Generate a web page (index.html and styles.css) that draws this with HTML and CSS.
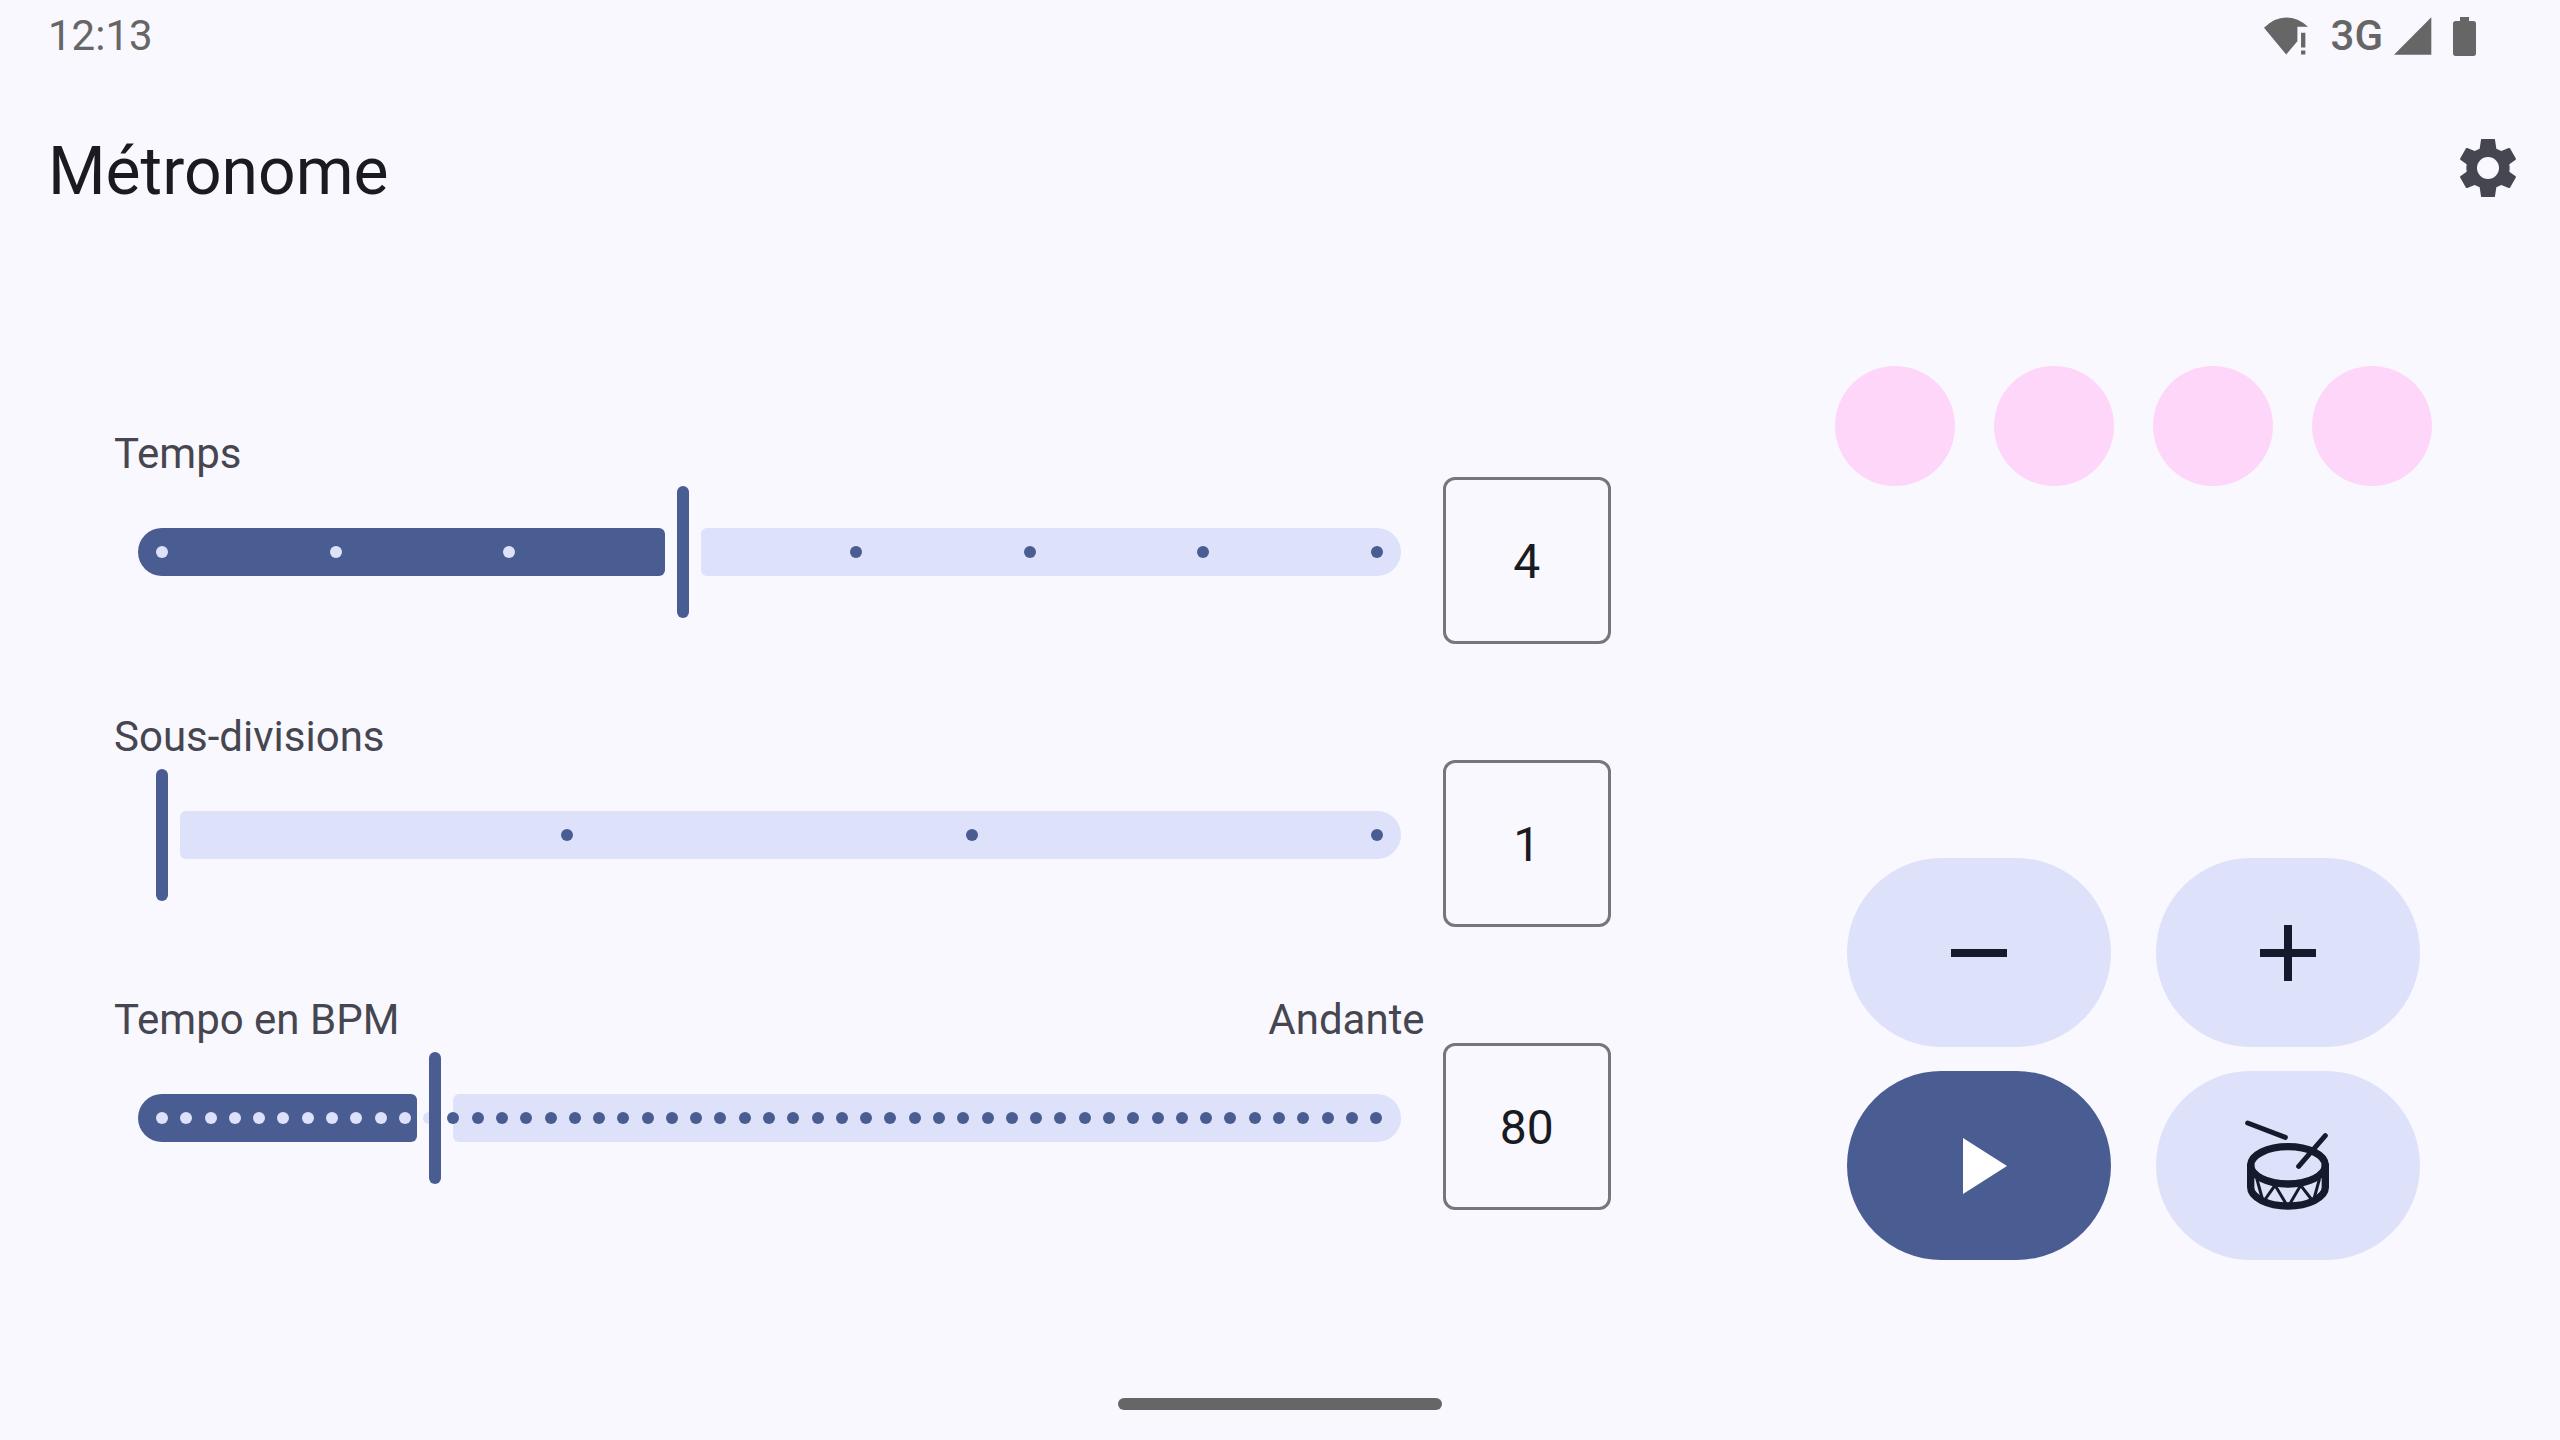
FILE: index.html
```html
<!DOCTYPE html>
<html lang="fr">
<head>
  <meta charset="utf-8">
  <meta name="viewport" content="width=device-width, initial-scale=1">
  <title>Métronome</title>
  <link rel="stylesheet" href="styles.css">
</head>
<body>
  <div class="status-bar">
    <span class="clock">12:13</span>
    <div class="status-icons">
      <svg class="icon-wifi" viewBox="99 49 133 114" aria-hidden="true">
        <path d="M99 81Q130 50 166 50T232 78H200V122L166 162Z"/>
        <path d="M211 96H224V141H211ZM211 150H224V162H211Z"/>
      </svg>
      <span class="network">3G</span>
      <svg class="icon-signal" viewBox="492 49 114 114" aria-hidden="true"><path d="M492 162L604 50V162Z"/></svg>
      <svg class="icon-battery" viewBox="669 48 69 117" aria-hidden="true">
        <path d="M690 48H717V60H730Q738 60 738 68V157Q738 165 730 165H677Q669 165 669 157V68Q669 60 677 60H690Z"/>
      </svg>
    </div>
  </div>

  <header class="app-bar">
    <h1 class="title">Métronome</h1>
    <button class="settings" type="button" aria-label="Paramètres">
      <svg viewBox="0 0 216 216" aria-hidden="true">
        <path fill-rule="evenodd" d="M89 21H127Q129 21 129 23L133 50L148 57L170 48Q172 47 174 49L191 79Q193 81 191 83L172 97Q174 108 172 119L191 133Q193 135 191 137L174 167Q172 169 170 168L148 159L133 166L129 193Q129 195 127 195H89Q87 195 87 193L83 166L68 159L46 168Q44 169 42 167L25 137Q23 135 25 133L44 119Q42 108 44 97L25 83Q23 81 25 79L42 49Q44 47 46 48L68 57L83 50L87 23Q87 21 89 21ZM108 75A33 33 0 1 0 108 141A33 33 0 1 0 108 75Z"/>
      </svg>
    </button>
  </header>

  <main class="content">
    <section class="fields">
      <div class="field">
        <div class="field-main">
          <div class="field-head"><label for="beats">Temps</label></div>
          <div class="slider" data-steps="7">
            <div class="track"><span class="active"></span><span class="inactive"></span></div>
            <div class="ticks"></div>
            <input class="range" id="beats" type="range" min="1" max="8" value="4">
          </div>
        </div>
        <input class="value" type="text" inputmode="numeric" value="4" aria-label="Temps">
      </div>

      <div class="field">
        <div class="field-main">
          <div class="field-head"><label for="subdivisions">Sous-divisions</label></div>
          <div class="slider" data-steps="3">
            <div class="track"><span class="active"></span><span class="inactive"></span></div>
            <div class="ticks"></div>
            <input class="range" id="subdivisions" type="range" min="1" max="4" value="1">
          </div>
        </div>
        <input class="value" type="text" inputmode="numeric" value="1" aria-label="Sous-divisions">
      </div>

      <div class="field">
        <div class="field-main">
          <div class="field-head"><label for="tempo">Tempo en BPM</label><span>Andante</span></div>
          <div class="slider" data-steps="50">
            <div class="track"><span class="active"></span><span class="inactive"></span></div>
            <div class="ticks"></div>
            <input class="range" id="tempo" type="range" min="40" max="218" value="80">
          </div>
        </div>
        <input class="value" type="text" inputmode="numeric" value="80" aria-label="Tempo en BPM">
      </div>
    </section>

    <section class="player">
      <div class="beats">
        <span class="beat"></span>
        <span class="beat"></span>
        <span class="beat"></span>
        <span class="beat"></span>
      </div>
      <div class="controls">
        <button class="control" type="button" aria-label="Ralentir">
          <svg viewBox="0 0 24 24" aria-hidden="true"><path d="M19 13H5v-2h14z"/></svg>
        </button>
        <button class="control" type="button" aria-label="Accélérer">
          <svg viewBox="0 0 24 24" aria-hidden="true"><path d="M19 13h-6v6h-2v-6H5v-2h6V5h2v6h6z"/></svg>
        </button>
        <button class="control control-primary" type="button" aria-label="Lecture">
          <svg viewBox="0 0 24 24" aria-hidden="true"><path d="M8 5v14l11-7z"/></svg>
        </button>
        <button class="control" type="button" aria-label="Battre le tempo">
          <svg class="drum" viewBox="0 0 288 288" aria-hidden="true">
            <g stroke-width="22">
              <ellipse cx="144" cy="142" rx="112" ry="56"/>
              <path d="M32 142V208C32 238 82 264 144 264S256 238 256 208V142"/>
            </g>
            <g stroke-width="15">
              <path d="M23 15L136 58M256 53L176 145"/>
            </g>
            <g stroke-width="9">
              <path d="M51 184L68 246M74 246L105 202L140 260M148 260L182 202L216 246M221 246L238 184"/>
            </g>
          </svg>
        </button>
      </div>
    </section>
  </main>

  <footer class="nav-bar"><span class="nav-handle"></span></footer>
  <script src="script.js"></script>
</body>
</html>
```
FILE: styles.css
```css
:root {
  --surface: #faf8ff;
  --on-surface: #1a1b21;
  --on-surface-variant: #45464f;
  --outline: #757680;
  --primary: #4a5d92;
  --secondary-container: #dde1f9;
  --on-secondary-container: #151b2c;
  --tertiary-container: #fdd6fa;
  --system: #666666;
}

* {
  box-sizing: border-box;
}

body {
  margin: 0;
  min-height: 100vh;
  display: flex;
  flex-direction: column;
  background: var(--surface);
  color: var(--on-surface);
  font-family: Roboto, sans-serif;
  font-size: 42px;
}

button,
input {
  font-family: inherit;
}

button {
  border: 0;
  padding: 0;
  cursor: pointer;
}

svg {
  display: block;
  fill: currentColor;
}

/* System status bar */
.status-bar {
  height: 72px;
  padding: 0 84px 0 48px;
  display: flex;
  align-items: center;
  justify-content: space-between;
  color: var(--system);
  line-height: 72px;
}

.status-icons {
  display: flex;
  align-items: center;
}

.network {
  font-weight: 500;
  margin: 0 11px 0 23px;
}

.icon-wifi {
  width: 44px;
  height: 38px;
}

.icon-signal {
  width: 38px;
  height: 38px;
  margin-right: 21px;
}

.icon-battery {
  width: 23px;
  height: 39px;
}

/* Application bar */
.app-bar {
  height: 168px;
  padding: 24px 36px 0 48px;
  display: flex;
  align-items: center;
  justify-content: space-between;
}

.title {
  margin: 0;
  padding-top: 8px;
  font-size: 66px;
  font-weight: 400;
  line-height: 84px;
}

.settings {
  width: 72px;
  height: 72px;
  background: none;
  color: var(--on-surface-variant);
}

/* Main area */
.content {
  flex: 1;
  display: grid;
  grid-template-columns: 2fr 1fr;
}

.fields {
  padding: 0 96px 0 114px;
  display: flex;
  flex-direction: column;
  justify-content: center;
  gap: 62px;
}

.field {
  display: grid;
  grid-template-columns: 1fr 168px;
  column-gap: 18px;
  align-items: end;
}

.field-main {
  padding-bottom: 26px;
}

.field-head {
  display: flex;
  justify-content: space-between;
  margin-bottom: 1px;
  color: var(--on-surface-variant);
  line-height: 62px;
}

.value {
  width: 168px;
  height: 167px;
  padding: 3px 0 0;
  border: 3px solid var(--outline);
  border-radius: 12px;
  background: none;
  color: var(--on-surface);
  font-size: 48px;
  text-align: center;
}

/* Slider: track, ticks and range input share one grid cell */
.slider {
  --fraction: 0;
  margin: 0 24px;
  display: grid;
  align-items: center;
}

.slider > * {
  grid-area: 1 / 1;
  min-width: 0;
}

.track {
  display: flex;
  gap: 36px;
  height: 48px;
}

.active {
  flex: none;
  width: calc(6px + var(--fraction) * (100% - 48px));
  border-radius: 24px 6px 6px 24px;
  background: var(--primary);
}

.at-min .active {
  visibility: hidden;
}

.inactive {
  flex: 1;
  border-radius: 6px 24px 24px 6px;
  background: var(--secondary-container);
}

.ticks {
  display: flex;
  justify-content: space-between;
  padding: 0 18px;
}

.tick {
  width: 12px;
  height: 12px;
  border-radius: 50%;
  background: var(--primary);
}

.tick-on {
  background: var(--secondary-container);
}

.range {
  appearance: none;
  height: 132px;
  margin: 0 18px;
  background: none;
}

.range::-webkit-slider-thumb {
  appearance: none;
  width: 12px;
  height: 132px;
  border-radius: 6px;
  background: var(--primary);
}

/* Beat indicators and buttons */
.player {
  padding: 126px 0 132px;
  display: flex;
  flex-direction: column;
  align-items: center;
  justify-content: space-between;
}

.beats {
  display: flex;
  gap: 39px;
}

.beat {
  width: 120px;
  height: 120px;
  border-radius: 50%;
  background: var(--tertiary-container);
}

.controls {
  display: grid;
  grid-template-columns: 264px 264px;
  gap: 24px 45px;
}

.control {
  height: 189px;
  display: grid;
  place-items: center;
  border-radius: 95px;
  background: var(--secondary-container);
  color: var(--on-secondary-container);
}

.control-primary {
  background: var(--primary);
  color: #ffffff;
}

.control svg {
  width: 96px;
  height: 96px;
}

.drum {
  fill: none;
  stroke: currentColor;
  stroke-linecap: round;
}

/* System navigation handle */
.nav-bar {
  height: 48px;
  padding-top: 6px;
  display: flex;
  justify-content: center;
}

.nav-handle {
  width: 324px;
  height: 12px;
  border-radius: 6px;
  background: var(--system);
}
```
FILE: script.js
```js
document.querySelectorAll(".field").forEach((field) => {
  const slider = field.querySelector(".slider");
  const range = field.querySelector(".range");
  const value = field.querySelector(".value");
  const ticks = field.querySelector(".ticks");
  const steps = Number(slider.dataset.steps);

  for (let i = 0; i <= steps; i++) {
    const tick = document.createElement("span");
    tick.className = "tick";
    ticks.append(tick);
  }

  function update() {
    const fraction = (range.value - range.min) / (range.max - range.min);
    slider.style.setProperty("--fraction", fraction);
    slider.classList.toggle("at-min", fraction === 0);
    [...ticks.children].forEach((tick, i) => {
      tick.classList.toggle("tick-on", i / steps <= fraction);
    });
    value.value = range.value;
  }

  range.addEventListener("input", update);
  value.addEventListener("change", () => {
    range.value = value.value;
    update();
  });
  update();
});
```
